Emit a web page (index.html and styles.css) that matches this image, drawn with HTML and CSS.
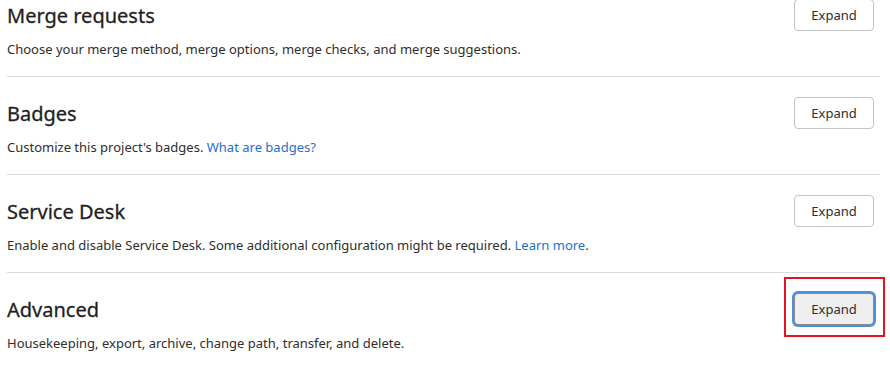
FILE: index.html
```html
<!DOCTYPE html>
<html lang="en">
<head>
  <meta charset="UTF-8">
  <meta name="viewport" content="width=device-width, initial-scale=1.0">
  <title>General settings</title>
  <link rel="stylesheet" href="styles.css">
</head>
<body>
  <div class="settings-page">
    <section class="settings">
      <div class="settings-header">
        <div class="settings-text">
          <h4 class="settings-title">Merge requests</h4>
          <p>Choose your merge method, merge options, merge checks, and merge suggestions.</p>
        </div>
        <button type="button" class="btn">Expand</button>
      </div>
    </section>

    <section class="settings">
      <div class="settings-header">
        <div class="settings-text">
          <h4 class="settings-title">Badges</h4>
          <p>Customize this project's badges. <a href="#">What are badges?</a></p>
        </div>
        <button type="button" class="btn">Expand</button>
      </div>
    </section>

    <section class="settings">
      <div class="settings-header">
        <div class="settings-text">
          <h4 class="settings-title">Service Desk</h4>
          <p>Enable and disable Service Desk. Some additional configuration might be required. <a href="#">Learn more</a>.</p>
        </div>
        <button type="button" class="btn">Expand</button>
      </div>
    </section>

    <section class="settings">
      <div class="settings-header">
        <div class="settings-text">
          <h4 class="settings-title">Advanced</h4>
          <p>Housekeeping, export, archive, change path, transfer, and delete.</p>
        </div>
        <span class="highlight">
          <button type="button" class="btn btn-focus">Expand</button>
        </span>
      </div>
    </section>
  </div>
</body>
</html>
```

FILE: styles.css
```css
body {
  margin: 0;
  font-family: "Noto Sans", "Open Sans", sans-serif;
  color: #2e2e2e;
  background: #fff;
  overflow: hidden;
}
.settings-page {
  margin: -22px 10px 0 7px;
}
.settings {
  border-top: 1px solid #dbdbdb;
  padding: 20px 0 17px;
}
.settings-header {
  display: flex;
  justify-content: space-between;
  align-items: flex-start;
}
.settings-title {
  margin: 3px 0 0;
  font-size: 20px;
  font-weight: normal;
  line-height: 28px;
  color: #1f1f1f;
  -webkit-text-stroke: 0.3px #1f1f1f;
}
.settings-text p {
  margin: 9px 0 0;
  font-size: 13px;
  line-height: 20px;
}
a {
  color: #1f6fcf;
  text-decoration: none;
}
.btn {
  width: 80px;
  height: 32px;
  margin-right: 6px;
  padding: 0;
  font-family: inherit;
  font-size: 13px;
  color: #2e2e2e;
  background: #fff;
  border: 1px solid #c4c4c4;
  border-radius: 4px;
  cursor: pointer;
}
.btn-focus {
  margin-right: 0;
  background: #efefef;
  border-color: #8a8a8a;
  box-shadow: 0 0 0 2px #4a90dc;
}
.highlight {
  display: block;
  margin: -16px -5px -12px 0;
  padding: 14px 9px 10px 8px;
  border: 2px solid #e81123;
}
```
